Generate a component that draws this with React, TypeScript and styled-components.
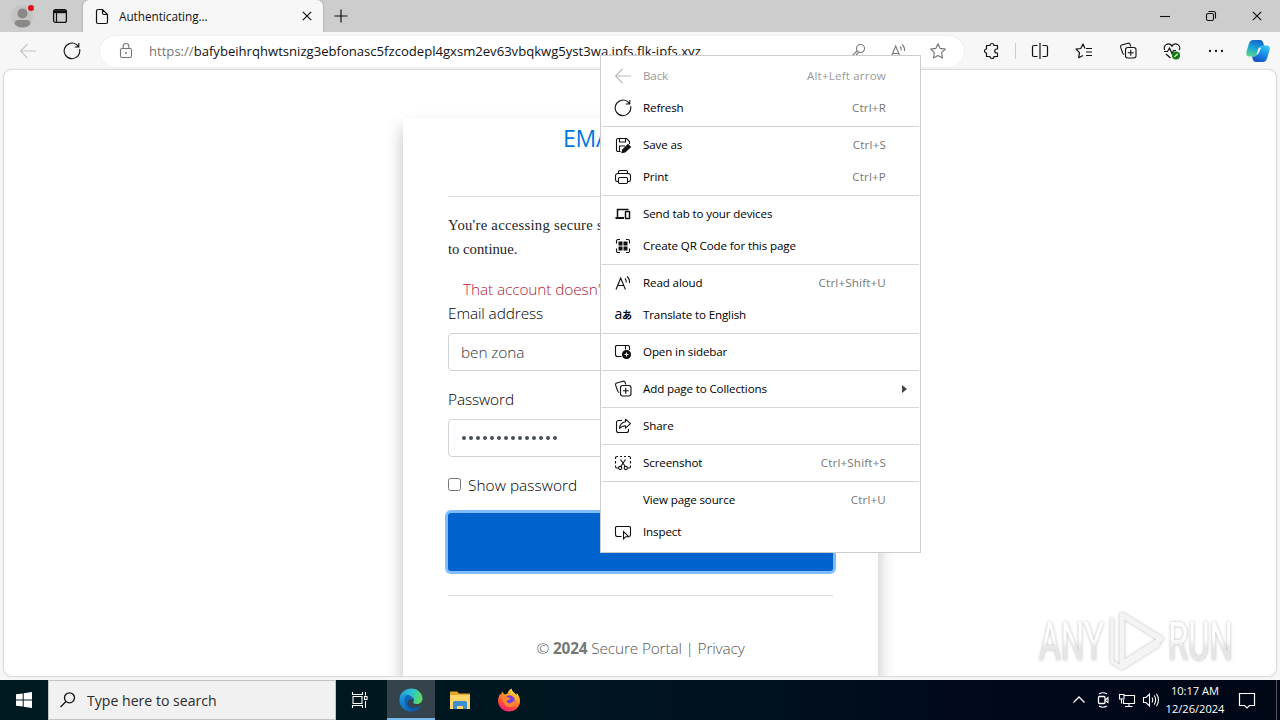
import React from "react";

import styled, { createGlobalStyle, css } from "styled-components";

const GlobalStyle = createGlobalStyle`
  * {
    box-sizing: border-box;
  }

  body {
    margin: 0;
    overflow: hidden;
    font-family: "Open Sans", "Noto Sans", sans-serif;
  }
`;

interface ColorProps {
  $color?: string;
}

/* ---------- icons ---------- */

interface IconProps {
  name: string;
  size?: number;
  color?: string;
}

const shapes: Record<string, React.ReactNode> = {
  back: <path d="M17 9H1.5M8.5 2L1.5 9l7 7" />,
  refresh: <path d="M16.6 7.2A7.8 7.8 0 1 1 13.6 2.6L15.4 4.6M15.8 1v4h-4" />,
  save: (
    <>
      <path d="M6.5 15.5H4A1.5 1.5 0 0 1 2.500 14V4A1.5 1.5 0 0 1 4 2.500H12.500L15.500 5.500V8M5.500 2.500V6H11.500V2.500M5.500 15.500V10H11" />
      <path d="M8 16.500L8.700 13.700L14 8.500L16.500 11L11 16Z" fill="currentColor" />
    </>
  ),
  print: (
    <>
      <path d="M4.500 13.500H3.200A1.700 1.700 0 0 1 1.500 11.800V7.800A2.300 2.300 0 0 1 3.800 5.500H14.200A2.300 2.300 0 0 1 16.500 7.800V11.800A1.700 1.700 0 0 1 14.800 13.500H13.500" />
      <path d="M4.500 5.500V4A1.500 1.500 0 0 1 6 2.500H12A1.500 1.500 0 0 1 13.500 4V5.500" />
      <rect x="4.500" y="9.500" width="9" height="6" rx="1.200" />
    </>
  ),
  devices: (
    <>
      <path d="M3.500 12V4.500H14.500" strokeWidth="1.500" />
      <path d="M1.500 13H10" strokeWidth="2" />
      <rect x="11.500" y="6.500" width="4" height="7" rx="0.500" strokeWidth="1.500" />
    </>
  ),
  qr: (
    <>
      <path d="M6 2.500H4A1.500 1.500 0 0 0 2.500 4V6.500M2.500 11.500V14A1.500 1.500 0 0 0 4 15.500H6M12 2.500H14A1.500 1.500 0 0 1 15.500 4V6.500M15.500 11.500V14A1.500 1.500 0 0 1 14 15.500H12" />
      <path d="M4.500 4.500H8.500V8.500H4.500ZM9.500 4.500H13.500V8.500H9.500ZM4.500 9.500H8.500V13.500H4.500ZM9.500 9.500H13.500V13.500H9.500Z" fill="currentColor" stroke="none" />
    </>
  ),
  read: (
    <>
      <path d="M2 15.500L6.700 4L11.400 15.500M3.700 11.500H9.700" />
      <path d="M11 4.500Q12.500 6 12.200 8.500M13 2.500Q16 5 15.500 9" />
    </>
  ),
  sidebar: (
    <>
      <path d="M7.500 13.500H3.500A2 2 0 0 1 1.500 11.500V3.500A1.500 1.500 0 0 1 3 2.500H14.500A2 2 0 0 1 15.500 4V7M11.500 2.500V6.500" />
      <circle cx="12.500" cy="11.500" r="4" fill="currentColor" />
      <path d="M12.500 9.500V13.500M10.500 11.500H14.500" stroke="#fff" />
    </>
  ),
  collections: (
    <>
      <path d="M5.200 12.500A2 2 0 0 1 3.700 11L1.600 5.200A1.800 1.800 0 0 1 2.700 3L9 1.200A1.800 1.800 0 0 1 11.100 2.400L11.800 4.500" />
      <rect x="6.500" y="5.500" width="10.500" height="10.500" rx="2.200" />
      <path d="M11.750 7.800V13.700M8.800 10.750H14.700" />
    </>
  ),
  share: (
    <>
      <path d="M8 3.500H4.500A2 2 0 0 0 2.500 5.500V13.500A2 2 0 0 0 4.500 15.500H12.500A2 2 0 0 0 14.500 13.500V12" />
      <path d="M11.500 2.200L16.500 6.700L11.500 11.200V8.700Q8 8.500 5.500 11.500Q6 5.500 11.500 4.700Z" strokeLinejoin="round" />
    </>
  ),
  screenshot: (
    <>
      <path d="M4 2.500H3A1.500 1.500 0 0 0 1.500 4V5M1.500 7V9.500M1.500 11.500V12.500A1.500 1.500 0 0 0 3 14H4M6 2.500H8M10 2.500H12M14 2.500H15A1.500 1.500 0 0 1 16.500 4V5M16.500 7V9.500M16.500 11.500V12.500A1.500 1.500 0 0 1 15 14H14" />
      <path d="M6.500 5.500L11.300 12.500M11.500 5.500L6.700 12.500" />
      <circle cx="6.200" cy="14" r="1.600" />
      <circle cx="11.800" cy="14" r="1.600" />
    </>
  ),
  inspect: (
    <>
      <path d="M7.500 13.500H3.500A2 2 0 0 1 1.500 11.500V4.500A1.500 1.500 0 0 1 3 3.500H15A1.500 1.500 0 0 1 16.500 4.500V11.500A2 2 0 0 1 15.500 13.500" />
      <path d="M9.500 8.500V16L11.700 13.700H14.700Z" />
    </>
  ),
  lock: (
    <>
      <rect x="3.500" y="6.500" width="11" height="9" rx="1.500" />
      <path d="M6.200 6.500V4.300A2.800 2.800 0 0 1 11.800 4.300V6.500" />
      <circle cx="9" cy="11" r="1" fill="currentColor" stroke="none" />
    </>
  ),
  file: <path d="M9.500 2.500H5A1.500 1.500 0 0 0 3.500 4V15A1.500 1.500 0 0 0 5 16.500H13A1.500 1.500 0 0 0 14.500 15V7.500ZM9.500 2.500V6A1.500 1.500 0 0 0 11 7.500H14.500" strokeWidth="1.200" />,
  tabs: (
    <>
      <rect x="2.600" y="2.600" width="12.800" height="12.800" rx="2" strokeWidth="1.300" />
      <path d="M2.500 4.700H15.500" strokeWidth="3" />
      <path d="M5.500 5V15" strokeWidth="1.200" />
    </>
  ),
  close: <path d="M4.800 4.800L13.200 13.200M13.200 4.800L4.800 13.200" strokeWidth="1.200" />,
  plus: <path d="M9 2.500V15.500M2.500 9H15.500" strokeWidth="1.200" />,
  minimize: <path d="M4 9.500H14" />,
  restore: (
    <>
      <rect x="4.500" y="6.500" width="7" height="7" rx="1.500" />
      <path d="M6.500 4.500H11.500A2 2 0 0 1 13.500 6.500V11.500" />
    </>
  ),
  key: (
    <>
      <path d="M8.300 8.700L2.500 14.500V16.500H5.500V14.500H7.500V12.500L9.500 10.500" />
      <circle cx="11.500" cy="6.500" r="4" />
    </>
  ),
  star: <path d="M9 1.800L11.200 6.400L16.400 7.100L12.600 10.700L13.500 15.900L9 13.400L4.500 15.900L5.400 10.700L1.600 7.100L6.800 6.400Z" strokeLinejoin="round" />,
  puzzle: <path d="M3.500 3.500H7A2 2 0 1 1 11 3.500H14.500V7H13.700A2 2 0 1 0 13.700 11H14.500V14.500H11A2 2 0 0 1 7 14.500H3.500V11A2 2 0 0 1 3.500 7Z" strokeLinejoin="round" strokeWidth="1.200" />,
  split: <path d="M6.500 3.500H3A1.500 1.500 0 0 0 1.500 5V13A1.500 1.500 0 0 0 3 14.500H6.500M11.500 3.500H15A1.500 1.500 0 0 1 16.500 5V13A1.500 1.500 0 0 1 15 14.500H11.500M9 1V17" strokeWidth="1.200" />,
  favorites: <path d="M10 6.500L8 2L5.800 6.500L1 7.200L4.500 10.700L3.700 15.700L8 13.500M11 6.500H17M11 10H17M11 13.500H17" strokeLinejoin="round" strokeWidth="1.200" />,
  health: (
    <>
      <path d="M1.700 8A4 4 0 0 1 9 4.200A4 4 0 0 1 16.300 8M1 9.500H4.500L6.500 6L9 11.500L10.500 8.500H13M3 12L7.500 16" strokeWidth="1.200" />
      <circle cx="13" cy="13.500" r="4" fill="#107c10" stroke="none" />
      <path d="M11.300 14.800L14.700 12" stroke="#fff" />
    </>
  ),
  dots: (
    <>
      <circle cx="3" cy="9" r="1.150" fill="currentColor" stroke="none" />
      <circle cx="9" cy="9" r="1.150" fill="currentColor" stroke="none" />
      <circle cx="15" cy="9" r="1.150" fill="currentColor" stroke="none" />
    </>
  ),
  search: (
    <>
      <circle cx="10.500" cy="6.800" r="5" strokeWidth="1.300" />
      <path d="M7 10.500L1.500 16" strokeWidth="1.300" />
    </>
  ),
  windows: <path d="M1 3.300L7.700 2.400V8.500H1ZM8.700 2.200L17 1V8.500H8.700ZM1 9.500H7.700V15.600L1 14.700ZM8.700 9.500H17V17L8.700 15.800Z" fill="currentColor" stroke="none" />,
  taskview: <path d="M1.500 1V3.500H11.500V1M1.500 17V14.500H11.500V17M2 5.500H11V12.500H2ZM14.500 1V4.500M14.500 10V17M13.500 5.500H16V8.500H13.500Z" strokeWidth="1.100" />,
  caret: <path d="M3.500 11.500L9 6L14.500 11.500" strokeWidth="1.300" />,
  meet: (
    <>
      <rect x="4.500" y="5.500" width="6.500" height="7" rx="1" strokeWidth="1.300" />
      <path d="M11 9.500L14 6.500V11.500L11 9.500M5 3Q9 0.500 13 3M5 15Q9 17.500 13 15" />
    </>
  ),
  network: <path d="M6 4.500H16.500V12.500H5.500V9M11 12.500V15.500M7 15.500H14.500M1.500 3.500H6V8H1.500ZM3.500 8V12.500" strokeWidth="1.100" />,
  volume: <path d="M1.500 6.500H4L7.500 3V15L4 11.500H1.500ZM10 6.500Q11.500 9 10 11.500M12.300 4.500Q15 9 12.300 13.500M14.500 2.800Q18.500 9 14.500 15.200" />,
  notice: <path d="M1.500 2.500H16.500V14.500H11.500L9 17L6.500 14.500H1.500Z" strokeWidth="1.200" />,
};

const Svg = styled.svg`
  flex: none;
  display: block;
`;

function Icon({ name, size = 18, color = "#111" }: IconProps) {
  return (
    <Svg
      width={size}
      height={size}
      viewBox="0 0 18 18"
      fill="none"
      stroke="currentColor"
      strokeWidth="1.1"
      color={color}
    >
      {shapes[name]}
    </Svg>
  );
}

/* ---------- browser frame ---------- */

const Desktop = styled.div`
  position: relative;
  display: flex;
  flex-direction: column;
  width: 1280px;
  height: 720px;
  overflow: hidden;
  background: #f7f7f7;
`;

const TabBar = styled.div`
  display: flex;
  align-items: center;
  height: 32px;
  background: #cdcdcd;
`;

const Slot = styled.div<{ $width: number }>`
  display: flex;
  flex: none;
  align-items: center;
  justify-content: center;
  width: ${(props) => props.$width}px;
`;

const Tab = styled.div`
  display: flex;
  align-items: center;
  width: 240px;
  height: 32px;
  padding: 0 7px 0 10px;
  border-radius: 6px 6px 0 0;
  background: #f7f7f7;
  box-shadow: 0 0 2px rgba(0, 0, 0, 0.35);
`;

const TabTitle = styled.span`
  flex: 1;
  margin-left: 8px;
  padding-bottom: 1px;
  font-size: 11.8px;
  letter-spacing: -0.05px;
  color: #111;
`;

const Spacer = styled.div`
  flex: 1;
`;

const Toolbar = styled.div`
  display: flex;
  align-items: center;
  height: 38px;
  padding-left: 4px;
  background: #f7f7f7;
`;

const AddressBar = styled.div`
  display: flex;
  align-items: center;
  width: 864px;
  height: 31px;
  margin-left: 8px;
  padding: 0 17px;
  border-radius: 16px;
  background: #fff;
  box-shadow: 0 0 2px rgba(0, 0, 0, 0.1);
`;

const Url = styled.span`
  flex: 1;
  margin-left: 14px;
  font-size: 13.1px;
  white-space: nowrap;
  color: #111;

  span {
    color: #767676;
  }
`;

const AddressTools = styled.div`
  display: flex;
  gap: 22px;
`;

const Divider = styled.div`
  width: 1px;
  height: 16px;
  margin: 0 4px 0 -4px;
  background: #ccc;
`;

const Viewport = styled.main`
  display: flex;
  flex: none;
  justify-content: center;
  width: 1272px;
  height: 606px;
  margin: 0 4px 4px;
  padding-top: 48px;
  overflow: hidden;
  border-radius: 7px;
  background: #fff;
  box-shadow: 0 0 2px rgba(0, 0, 0, 0.4);
`;

/* ---------- sign in card ---------- */

const Card = styled.section`
  flex: none;
  width: 475px;
  height: 640px;
  margin-left: 1px;
  padding: 0 45px;
  background: #fff;
  box-shadow: 0 10px 16px rgba(0, 0, 0, 0.26);
  font-size: 15.4px;
  font-weight: 300;
  letter-spacing: -0.1px;
  color: #000;
`;

const Title = styled.h1`
  height: 78px;
  margin: 0;
  padding-left: 115px;
  font-size: 23px;
  font-weight: 400;
  line-height: 40px;
  letter-spacing: -0.2px;
  color: #0078e0;
`;

const Rule = styled.hr`
  height: 1px;
  margin: 0;
  border: 0;
  background: #dcdcdc;
`;

const Notice = styled.p`
  height: 48px;
  margin: 16px 0 17px;
  font-family: "Liberation Serif", serif;
  font-size: 14.7px;
  font-weight: 400;
  line-height: 24px;
  letter-spacing: 0;
  color: #212529;

  &::first-line {
    letter-spacing: 0.26px;
  }
`;

const ErrorText = styled.p`
  height: 24px;
  margin: 0;
  padding-left: 15px;
  line-height: 24px;
  color: #b01c3c;
`;

const Label = styled.label`
  display: block;
  height: 24px;
  margin-bottom: 7px;
  line-height: 24px;
`;

const Field = styled.div`
  display: flex;
  align-items: center;
  height: 38px;
  margin-bottom: 17px;
  padding-left: 12px;
  border: 1px solid #ced4da;
  border-radius: 4px;
  color: #31373c;
`;

const Dots = styled.div`
  display: flex;
  gap: 3px;
  padding-left: 1px;

  i {
    width: 4px;
    height: 4px;
    border-radius: 50%;
    background: #495057;
  }
`;

const CheckRow = styled.label`
  display: flex;
  align-items: center;
  gap: 7px;
  height: 22px;
  letter-spacing: 0.05px;
`;

const Checkbox = styled.span`
  width: 13px;
  height: 13px;
  margin-bottom: 1px;
  border: 1px solid #767676;
  border-radius: 2.5px;
`;

const SubmitButton = styled.div`
  height: 58px;
  margin: 17px 0 24px;
  border-radius: 3px;
  background: #0062cc;
  box-shadow: 0 0 0 3px #80bdff;
`;

const Footer = styled.footer`
  margin-top: 41px;
  text-align: center;
  line-height: 24px;
  letter-spacing: -0.16px;
  color: #555;

  b {
    font-weight: 700;
    color: #777;
  }
`;

/* ---------- context menu ---------- */

const Menu = styled.div`
  position: absolute;
  top: 55px;
  left: 600px;
  width: 321px;
  padding: 4px 0;
  border: 1px solid #ccc;
  background: #fff;
`;

const MenuItem = styled.div<ColorProps>`
  display: flex;
  align-items: center;
  height: 32px;
  padding: 0 12px 0 13px;
  font-size: 11.6px;
  letter-spacing: -0.13px;
  color: ${(props) => props.$color || "#000"};
`;

const MenuIcon = styled.div`
  display: flex;
  align-items: center;
  justify-content: center;
  width: 18px;
  margin-right: 11px;
`;

const MenuLabel = styled.span`
  flex: 1;
  padding-bottom: 2px;
  white-space: nowrap;
`;

const Shortcut = styled.span<ColorProps>`
  margin-right: 22px;
  padding-bottom: 2px;
  letter-spacing: 0.18px;
  color: ${(props) => props.$color || "#777"};
`;

const MenuRule = styled.div`
  height: 1px;
  margin: 2px 1px;
  background: #d5d5d5;
`;

const SubmenuArrow = styled.i`
  margin-right: 1px;
  border: 4px solid transparent;
  border-right: 0;
  border-left: 5px solid #444;
`;

const Translate = styled.span`
  padding-bottom: 2px;
  font-family: "Open Sans", "Noto Sans CJK JP", sans-serif;
  font-size: 14px;
  letter-spacing: -0.5px;
  line-height: 16px;
  white-space: nowrap;

  small {
    font-family: "Noto Sans CJK JP", sans-serif;
    font-size: 10px;
    font-weight: 700;
  }
`;

interface Entry {
  icon?: string;
  label: string;
  keys?: string;
  submenu?: boolean;
  disabled?: boolean;
}

const menuGroups: Entry[][] = [
  [
    { icon: "back", label: "Back", keys: "Alt+Left arrow", disabled: true },
    { icon: "refresh", label: "Refresh", keys: "Ctrl+R" },
  ],
  [
    { icon: "save", label: "Save as", keys: "Ctrl+S" },
    { icon: "print", label: "Print", keys: "Ctrl+P" },
  ],
  [
    { icon: "devices", label: "Send tab to your devices" },
    { icon: "qr", label: "Create QR Code for this page" },
  ],
  [
    { icon: "read", label: "Read aloud", keys: "Ctrl+Shift+U" },
    { icon: "translate", label: "Translate to English" },
  ],
  [{ icon: "sidebar", label: "Open in sidebar" }],
  [{ icon: "collections", label: "Add page to Collections", submenu: true }],
  [{ icon: "share", label: "Share" }],
  [{ icon: "screenshot", label: "Screenshot", keys: "Ctrl+Shift+S" }],
  [
    { label: "View page source", keys: "Ctrl+U" },
    { icon: "inspect", label: "Inspect" },
  ],
];

function ContextMenu() {
  return (
    <Menu>
      {menuGroups.map((group, i) => (
        <React.Fragment key={i}>
          {i > 0 && <MenuRule />}
          {group.map((item) => (
            <MenuItem key={item.label} $color={item.disabled ? "#999" : undefined}>
              <MenuIcon>
                {item.icon === "translate" ? (
                  <Translate>
                    a<small>あ</small>
                  </Translate>
                ) : (
                  item.icon && (
                    <Icon name={item.icon} color={item.disabled ? "#bbb" : "#111"} />
                  )
                )}
              </MenuIcon>
              <MenuLabel>{item.label}</MenuLabel>
              {item.keys && (
                <Shortcut $color={item.disabled ? "#999" : undefined}>{item.keys}</Shortcut>
              )}
              {item.submenu && <SubmenuArrow />}
            </MenuItem>
          ))}
        </React.Fragment>
      ))}
    </Menu>
  );
}

/* ---------- taskbar ---------- */

const Taskbar = styled.div`
  display: flex;
  flex: none;
  align-items: center;
  height: 40px;
  background: linear-gradient(90deg, #001a22 0%, #001620 45%, #000a1c 75%, #000716 100%);
`;

const SearchBox = styled.div`
  display: flex;
  align-items: center;
  width: 288px;
  height: 40px;
  padding-left: 10px;
  border: 1px solid #c4c4c4;
  background: #f1f1f1;
  font-size: 14.1px;
  color: #2b2b2b;

  span {
    margin-left: 10px;
  }
`;

const TaskButton = styled.div<{ $active?: boolean }>`
  display: flex;
  align-items: center;
  justify-content: center;
  width: 49px;
  height: 40px;

  ${(props) =>
    props.$active &&
    css`
      width: 48px;
      background: #35444c;
      border-bottom: 2px solid #76b9ed;
      padding-top: 1px;
    `}
`;

const Clock = styled.div`
  width: 66px;
  margin-left: -1px;
  padding-bottom: 1px;
  font-size: 11.1px;
  line-height: 18px;
  text-align: center;
  white-space: nowrap;
  color: #fff;
`;

const ShowDesktop = styled.div`
  width: 4px;
  height: 40px;
  margin-left: 11px;
  border-left: 1px solid #4d5662;
`;

const Watermark = styled.svg`
  position: absolute;
  top: 600px;
  left: 1028px;
  overflow: visible;
  filter: drop-shadow(0 0 1.5px rgba(0, 0, 0, 0.28));
`;

function Avatar() {
  return (
    <Svg width="24" height="26" viewBox="0 0 24 26">
      <circle cx="11" cy="13" r="11" fill="#c4c4c4" />
      <circle cx="11.500" cy="10.500" r="5" fill="#8c8885" />
      <path d="M3.500 21Q3.500 17 7.500 17H15.500Q19.500 17 19.500 21Q16.500 24.500 11.500 24.500Q6.500 24.500 3.500 21Z" fill="#8c8885" />
      <circle cx="20" cy="5" r="3" fill="#e00b1c" />
    </Svg>
  );
}

function Copilot() {
  return (
    <Svg width="24" height="24" viewBox="0 0 24 24">
      <defs>
        <linearGradient id="copA" x1="0.6" y1="0" x2="0.3" y2="1">
          <stop offset="0" stopColor="#1566c8" />
          <stop offset="0.5" stopColor="#1aa5d8" />
          <stop offset="1" stopColor="#5bd68b" />
        </linearGradient>
        <linearGradient id="copB" x1="0.7" y1="0" x2="0.3" y2="1">
          <stop offset="0" stopColor="#35c3f4" />
          <stop offset="0.5" stopColor="#168ae6" />
          <stop offset="1" stopColor="#1450c4" />
        </linearGradient>
      </defs>
      <path d="M7 1H14Q16.500 1 17.300 4L18.200 7H16Q14 7 13.300 9.500L11.500 15Q10.600 17.500 8 17.500H3Q-0.500 17.500 0.500 12.500L3 4.500Q4.200 1 7 1Z" fill="url(#copA)" />
      <path d="M17 23H10Q7.500 23 6.700 20L6 17.500H8Q10.300 17.500 11.200 15L13.300 9Q14.100 6.500 17 6.500H21Q24.500 6.500 23.500 11.500L21 19.500Q19.800 23 17 23Z" fill="url(#copB)" />
      <path d="M12.800 8.700H15L12 15.500H10.300Z" fill="#fff" />
    </Svg>
  );
}

function EdgeLogo() {
  return (
    <Svg width="24" height="24" viewBox="0 0 24 24">
      <defs>
        <linearGradient id="edgeTop" x1="0" y1="0.3" x2="1" y2="0.5">
          <stop offset="0" stopColor="#209fdd" />
          <stop offset="0.5" stopColor="#2bc3d2" />
          <stop offset="1" stopColor="#5fdc5b" />
        </linearGradient>
        <linearGradient id="edgeLow" x1="0" y1="0" x2="0.6" y2="1">
          <stop offset="0" stopColor="#1b9de2" />
          <stop offset="1" stopColor="#1062bd" />
        </linearGradient>
      </defs>
      <path d="M0.500 11A11.500 11 0 0 1 12 0.500C19 0.500 23.500 5.500 23.500 10.500C23.500 14 20.800 16 17.800 16C15 16 13.700 14.900 14.500 13.500C17 9.500 9 4.500 0.500 11Z" fill="url(#edgeTop)" />
      <path d="M0.500 12.500C0.500 8 4.500 6 8.500 6.500C12 7 14 9 14.300 11.500C11.500 10 8 12 8 15.500C8 19.500 13 22.500 21.500 18.500C19.500 22 16 23.500 12 23.500C5.500 23.500 0.500 18.500 0.500 12.500Z" fill="url(#edgeLow)" />
      <path d="M8 7C4.500 9.500 5 16 8 19.500C10.500 22.500 14 23.300 15.500 23C19 22.500 21 20 21.700 18.300C15.500 21 9 19.500 9 14.500C9 12.500 10.500 11.500 12 11.500C13 9.500 11.500 7 8 7Z" fill="#0c58a8" opacity="0.7" />
    </Svg>
  );
}

function Explorer() {
  return (
    <Svg width="22" height="20" viewBox="0 0 22 20">
      <path d="M1 1.500H8L10 3.500H21V18H1Z" fill="#e6a52c" />
      <path d="M1 5H21V19H1Z" fill="#ffd667" />
      <path d="M4 19V12.500Q4 11 5.500 11H16.500Q18 11 18 12.500V19H14V16H8V19Z" fill="#3f8fd0" />
    </Svg>
  );
}

function Firefox() {
  return (
    <Svg width="24" height="24" viewBox="0 0 24 24">
      <defs>
        <linearGradient id="fox" x1="0.8" y1="0" x2="0.3" y2="1">
          <stop offset="0" stopColor="#fff04a" />
          <stop offset="0.4" stopColor="#ff9a25" />
          <stop offset="0.75" stopColor="#ff4345" />
          <stop offset="1" stopColor="#e6217b" />
        </linearGradient>
      </defs>
      <path d="M5 3.500L7.500 6.500L10.500 5.800C10.800 3.500 12.500 1.500 14.500 0.500C15 3.500 17.500 4.500 19.500 7L19.700 5C22 7.500 23.200 10.500 23 13.500C22.500 19.500 18 23.500 12 23.500C5.500 23.500 1 18.500 1 12.500C1 9.500 2.500 7.500 3 6L4.200 6.700Z" fill="url(#fox)" />
      <circle cx="12.500" cy="12.500" r="5.200" fill="#7a3fe0" />
      <path d="M5 10Q8 8 11.500 9.500L13.500 10.500Q12 12.500 9.500 12.500Q10 15.500 13 15.500Q16 15 17 12Q19.500 18 13.500 19Q7 19.500 5 10Z" fill="#ff8a2a" />
    </Svg>
  );
}

function App() {
  return (
    <Desktop>
      <GlobalStyle />
      <TabBar>
        <Slot $width={46}>
          <Avatar />
        </Slot>
        <Slot $width={28}>
          <Icon name="tabs" />
        </Slot>
        <Slot $width={9} />
        <Tab>
          <Icon name="file" />
          <TabTitle>Authenticating...</TabTitle>
          <Icon name="close" />
        </Tab>
        <Slot $width={35}>
          <Icon name="plus" />
        </Slot>
        <Spacer />
        <Slot $width={46}>
          <Icon name="minimize" />
        </Slot>
        <Slot $width={46}>
          <Icon name="restore" />
        </Slot>
        <Slot $width={46}>
          <Icon name="close" />
        </Slot>
      </TabBar>

      <Toolbar>
        <Slot $width={48}>
          <Icon name="back" color="#c4c4c4" />
        </Slot>
        <Slot $width={40}>
          <Icon name="refresh" />
        </Slot>
        <AddressBar>
          <Icon name="lock" color="#767676" />
          <Url>
            <span>https://</span>
            bafybeihrqhwtsnizg3ebfonasc5fzcodepl4gxsm2ev63vbqkwg5yst3wa.ipfs.flk-ipfs.xyz
          </Url>
          <AddressTools>
            <Icon name="key" color="#767676" />
            <Icon name="read" color="#767676" />
            <Icon name="star" color="#767676" />
          </AddressTools>
        </AddressBar>
        <Slot $width={55}>
          <Icon name="puzzle" />
        </Slot>
        <Divider />
        <Slot $width={40}>
          <Icon name="split" />
        </Slot>
        <Slot $width={48}>
          <Icon name="favorites" />
        </Slot>
        <Slot $width={40}>
          <Icon name="collections" />
        </Slot>
        <Slot $width={48}>
          <Icon name="health" />
        </Slot>
        <Slot $width={40}>
          <Icon name="dots" />
        </Slot>
        <Slot $width={44}>
          <Copilot />
        </Slot>
      </Toolbar>

      <Viewport>
        <Card>
          <Title>EMAIL</Title>
          <Rule />
          <Notice>
            You're accessing secure site
            <br />
            to continue.
          </Notice>
          <ErrorText>That account doesn't exist.</ErrorText>
          <Label>Email address</Label>
          <Field>ben zona</Field>
          <Label>Password</Label>
          <Field>
            <Dots>
              {Array.from({ length: 14 }, (_, i) => (
                <i key={i} />
              ))}
            </Dots>
          </Field>
          <CheckRow>
            <Checkbox />
            Show password
          </CheckRow>
          <SubmitButton />
          <Rule />
          <Footer>
            © <b>2024</b> Secure Portal | Privacy
          </Footer>
        </Card>
      </Viewport>

      <Taskbar>
        <Slot $width={48}>
          <Icon name="windows" color="#fff" />
        </Slot>
        <SearchBox>
          <Icon name="search" />
          <span>Type here to search</span>
        </SearchBox>
        <Slot $width={48}>
          <Icon name="taskview" color="#fff" />
        </Slot>
        <Slot $width={3} />
        <TaskButton $active>
          <EdgeLogo />
        </TaskButton>
        <TaskButton>
          <Explorer />
        </TaskButton>
        <TaskButton>
          <Firefox />
        </TaskButton>
        <Spacer />
        <Slot $width={24}>
          <Icon name="caret" color="#fff" />
        </Slot>
        <Slot $width={24}>
          <Icon name="meet" color="#fff" />
        </Slot>
        <Slot $width={24}>
          <Icon name="network" color="#fff" />
        </Slot>
        <Slot $width={24}>
          <Icon name="volume" color="#fff" />
        </Slot>
        <Clock>
          10:17 AM
          <br />
          12/26/2024
        </Clock>
        <Slot $width={37}>
          <Icon name="notice" color="#fff" />
        </Slot>
        <ShowDesktop />
      </Taskbar>

      <ContextMenu />

      <Watermark width="245" height="80" viewBox="0 0 245 80">
        <defs>
          <linearGradient id="mark" x1="0" y1="0" x2="0" y2="1">
            <stop offset="0.45" stopColor="#fff" />
            <stop offset="0.6" stopColor="#e6e6e6" />
          </linearGradient>
        </defs>
        <g fill="url(#mark)" fontFamily="Roboto, sans-serif" fontSize="53" fontWeight="400">
          <text x="11" y="60" textLength="65" lengthAdjust="spacingAndGlyphs">
            ANY
          </text>
          <text x="140" y="60" textLength="65" lengthAdjust="spacingAndGlyphs">
            RUN
          </text>
        </g>
        <g fill="none" stroke="#f4f4f4" strokeWidth="5" strokeLinejoin="round">
          <path d="M94 15L133 39L94 64Z" />
          <path d="M84 18V62L94 68L132 44" strokeWidth="3.500" />
        </g>
      </Watermark>
    </Desktop>
  );
}

export default App;
